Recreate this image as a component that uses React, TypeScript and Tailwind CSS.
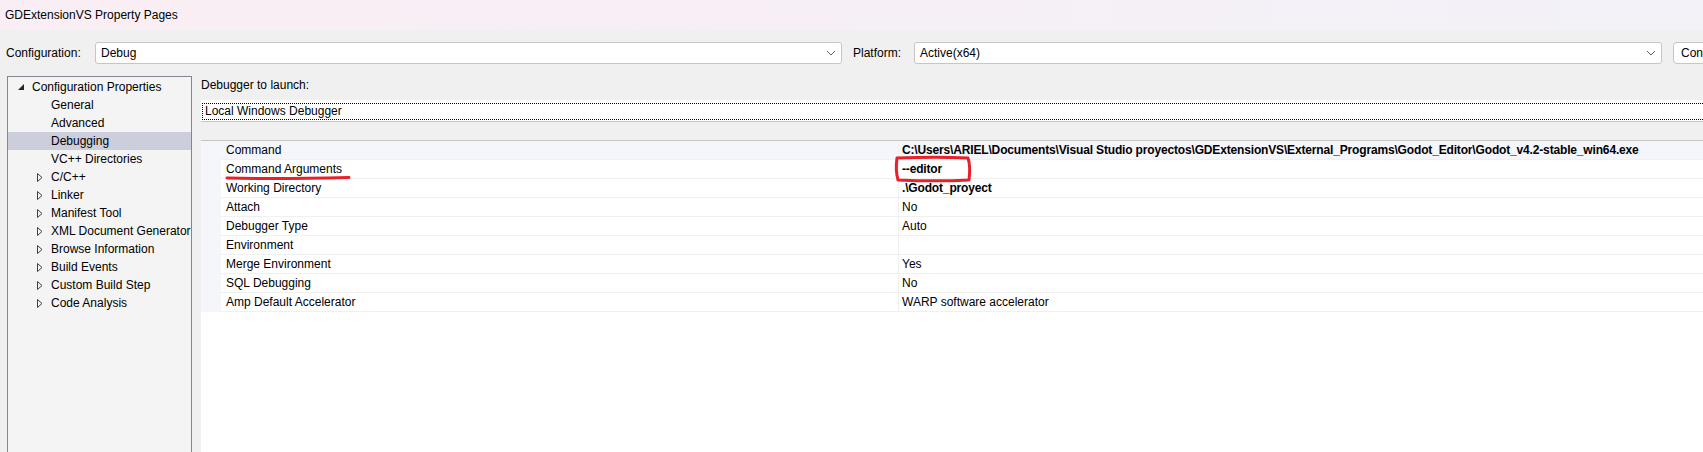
const tree = [
  { label: "General", arrow: false },
  { label: "Advanced", arrow: false },
  { label: "Debugging", arrow: false, selected: true },
  { label: "VC++ Directories", arrow: false },
  { label: "C/C++", arrow: true },
  { label: "Linker", arrow: true },
  { label: "Manifest Tool", arrow: true },
  { label: "XML Document Generator", arrow: true },
  { label: "Browse Information", arrow: true },
  { label: "Build Events", arrow: true },
  { label: "Custom Build Step", arrow: true },
  { label: "Code Analysis", arrow: true },
];

const props = [
  { name: "Command", value: "C:\\Users\\ARIEL\\Documents\\Visual Studio proyectos\\GDExtensionVS\\External_Programs\\Godot_Editor\\Godot_v4.2-stable_win64.exe", bold: true },
  { name: "Command Arguments", value: "--editor", bold: true },
  { name: "Working Directory", value: ".\\Godot_proyect", bold: true },
  { name: "Attach", value: "No" },
  { name: "Debugger Type", value: "Auto" },
  { name: "Environment", value: "" },
  { name: "Merge Environment", value: "Yes" },
  { name: "SQL Debugging", value: "No" },
  { name: "Amp Default Accelerator", value: "WARP software accelerator" },
];

function Chevron() {
  return (
    <svg width="10" height="6" viewBox="0 0 10 6" className="shrink-0">
      <path d="M1 1 L5 5 L9 1" fill="none" stroke="#606060" strokeWidth="1" />
    </svg>
  );
}

function Combo({ text, className }: { text: string; className: string }) {
  return (
    <div className={`h-[22px] flex items-center justify-between bg-white border border-[#c6c6c6] rounded-[3px] pl-[5px] pr-[5px] shrink-0 ${className}`}>
      <span>{text}</span>
      <Chevron />
    </div>
  );
}

export default function App() {
  return (
    <div
      className="w-[1703px] h-[452px] overflow-hidden bg-[#f0f0f0] text-[12px] text-black leading-none relative"
      style={{ fontFamily: '"Liberation Sans", Arial, sans-serif' }}
    >
      {/* Title bar */}
      <div className="h-[30px] flex items-center pl-[5px] bg-gradient-to-r from-[#f9eef4] via-[#f7eff6] to-[#f2f2f8]">
        GDExtensionVS Property Pages
      </div>

      {/* Configuration row */}
      <div className="mt-[12px] h-[22px] flex items-center">
        <span className="ml-[6px] w-[89px] shrink-0">Configuration:</span>
        <Combo text="Debug" className="w-[747px]" />
        <span className="ml-[11px] w-[61px] shrink-0">Platform:</span>
        <Combo text="Active(x64)" className="w-[748px]" />
        <div className="ml-[11px] h-[22px] w-[140px] bg-white border border-[#c6c6c6] rounded-[4px] flex items-center pl-[7px] shrink-0 whitespace-nowrap">
          Configuration Manager...
        </div>
      </div>

      {/* Body */}
      <div className="mt-[12px] flex">
        {/* Tree */}
        <div className="ml-[7px] w-[185px] h-[400px] bg-[#f4f4f4] border border-[#828790] pt-[1px] shrink-0">
          <div className="h-[18px] flex items-center">
            <svg width="8" height="8" viewBox="0 0 8 8" className="ml-[9px] mr-[7px]">
              <path d="M7 1 L7 7 L1 7 Z" fill="#262626" />
            </svg>
            <span>Configuration Properties</span>
          </div>
          {tree.map((t) => (
            <div
              key={t.label}
              className={`h-[18px] flex items-center ${t.selected ? "bg-[#cccedb]" : ""}`}
            >
              <div className="w-[43px] flex justify-end pr-[4px]">
                {t.arrow && (
                  <svg width="6" height="9" viewBox="0 0 6 9" className="mr-[4px]">
                    <path d="M0.5 0.5 L5 4.5 L0.5 8.5 Z" fill="none" stroke="#404040" strokeWidth="1" />
                  </svg>
                )}
              </div>
              <span className="whitespace-nowrap">{t.label}</span>
            </div>
          ))}
        </div>

        {/* Right side */}
        <div className="ml-[9px] flex-1 min-w-0">
          <div className="h-[16px] flex items-center pt-[1px]">Debugger to launch:</div>
          <div className="mt-[8px] h-[22px] bg-white border-b border-[#c6c6c6] flex items-center pl-[1px] pt-[1px] w-[1600px]">
            <div className="h-[17px] flex-1 border border-dotted border-black flex items-center pl-[2px]">
              Local Windows Debugger
            </div>
          </div>

          {/* Property grid */}
          <div className="mt-[18px] bg-white border-t border-[#c6c6c6] h-[320px] w-[1600px]">
            {props.map((p, i) => (
              <div key={p.name} className="flex h-[19px]">
                <div className="w-[20px] bg-[#f4f6fb] shrink-0" />
                <div
                  className={`flex flex-1 border-b border-[#f0f0f0] ${i === 0 ? "bg-[#f4f6fb]" : ""}`}
                >
                  <div className="w-[678px] pl-[5px] flex items-center border-r border-[#f0f0f0] whitespace-nowrap">
                    {p.name}
                  </div>
                  <div className={`pl-[3px] flex items-center whitespace-nowrap ${p.bold ? "font-bold tracking-[-0.16px]" : ""}`}>
                    {p.value}
                  </div>
                </div>
              </div>
            ))}
          </div>
        </div>
      </div>

      {/* Red annotations */}
      <svg className="absolute left-0 top-0 pointer-events-none" width="1703" height="452">
        <path d="M227 178 C260 179 310 178.5 349 177.5" fill="none" stroke="#e8202a" strokeWidth="3" strokeLinecap="round" />
        <path
          d="M897 158 C920 157 950 157 968 158 C970 164 970 172 969 180 C950 181 920 181 898 180 C896 173 896 165 897 158 Z"
          fill="none"
          stroke="#e8202a"
          strokeWidth="3"
          strokeLinejoin="round"
        />
      </svg>
    </div>
  );
}
